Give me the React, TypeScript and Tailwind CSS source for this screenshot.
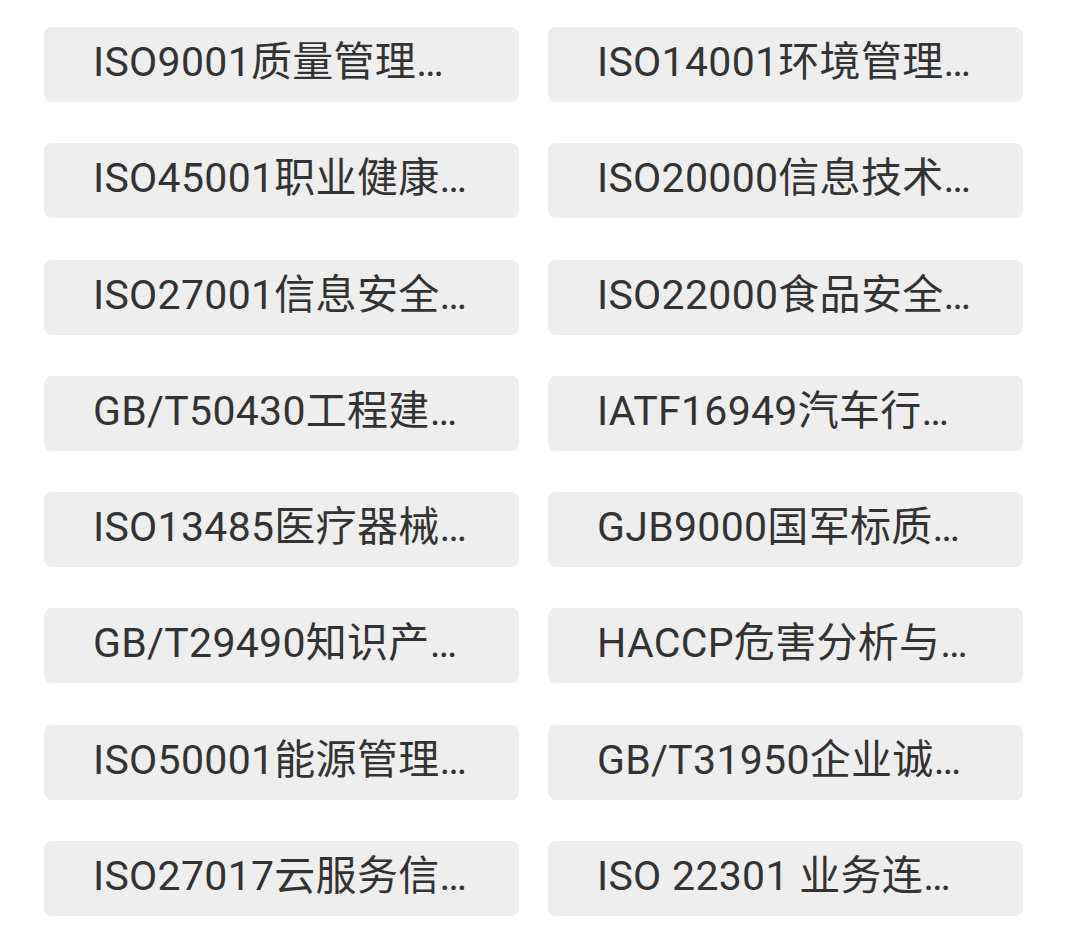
const items = [
  "ISO9001质量管理…",
  "ISO14001环境管理…",
  "ISO45001职业健康…",
  "ISO20000信息技术…",
  "ISO27001信息安全…",
  "ISO22000食品安全…",
  "GB/T50430工程建…",
  "IATF16949汽车行…",
  "ISO13485医疗器械…",
  "GJB9000国军标质…",
  "GB/T29490知识产…",
  "HACCP危害分析与…",
  "ISO50001能源管理…",
  "GB/T31950企业诚…",
  "ISO27017云服务信…",
  "ISO 22301 业务连…",
];

export default function App() {
  return (
    <div
      className="w-[1080px] h-[935px] bg-white pt-[27px] pl-[44px] overflow-hidden"
      style={{ fontFamily: 'Roboto, "Noto Sans CJK SC", sans-serif' }}
    >
      <div className="grid grid-cols-[475px_475px] gap-x-[29px] gap-y-[41.3px]">
        {items.map((label) => (
          <button
            key={label}
            className="h-[75px] rounded-lg bg-[#eeeeee] flex items-center pl-[49px] pr-4 text-left text-[41px] tracking-[0.3px] leading-none text-[#333333] whitespace-nowrap"
          >
            <span className="-mt-1">{label}</span>
          </button>
        ))}
      </div>
    </div>
  );
}
